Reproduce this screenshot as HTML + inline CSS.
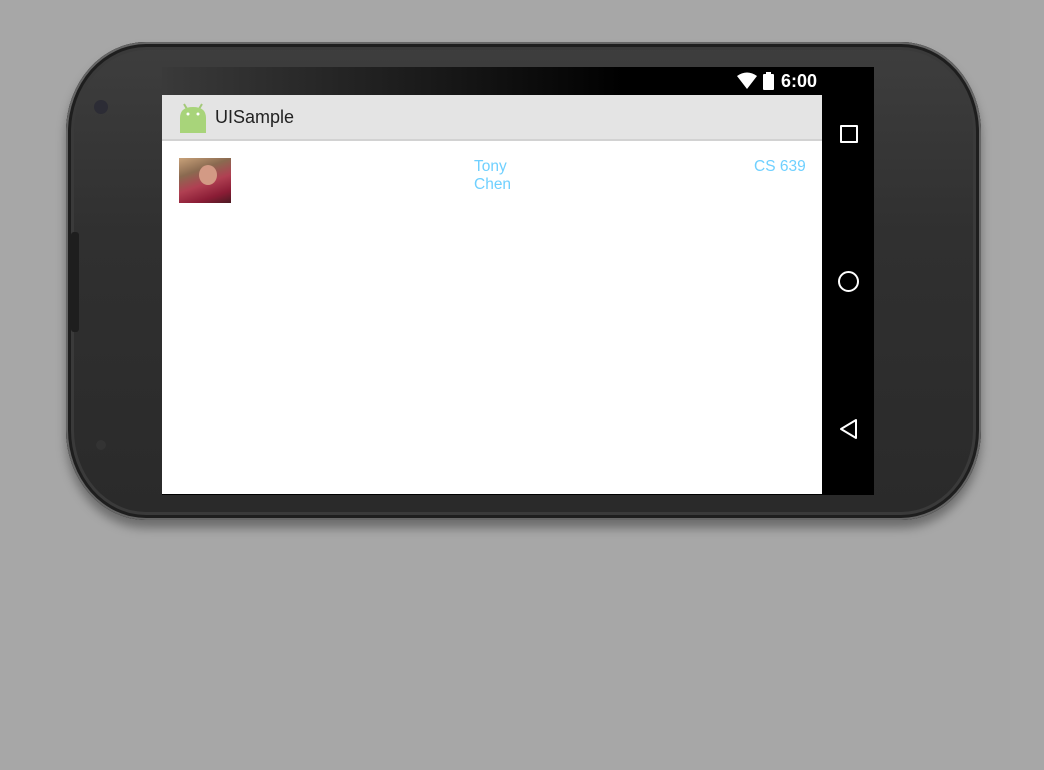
<!DOCTYPE html>
<html><head><style>
body{margin:0;width:1044px;height:770px;background:#a7a7a7;position:relative;overflow:hidden;font-family:"Liberation Sans",sans-serif}
.phone{position:absolute;left:66px;top:42px;width:915px;height:478px;border-radius:80px/90px;background:linear-gradient(#3e3e3e,#303030 40%,#2a2a2a);box-shadow:0 8px 10px rgba(0,0,0,.35),inset 0 0 0 2px #666,inset 0 0 0 5px #1e1e1e,inset 0 0 0 8px #3a3a3a}
.abs{position:absolute}
</style></head><body>
<div class="phone"></div>
<div class="abs" style="left:94px;top:100px;width:14px;height:14px;border-radius:50%;background:#2c2c35"></div>
<div class="abs" style="left:96px;top:440px;width:10px;height:10px;border-radius:50%;background:#333"></div>
<div class="abs" style="left:71px;top:232px;width:8px;height:100px;background:#1e1e1e;border-radius:3px"></div>
<div class="abs" style="left:162px;top:67px;width:712px;height:428px;background:#000"></div>
<div class="abs" style="left:162px;top:67px;width:660px;height:28px;background:linear-gradient(90deg,#3a3a3a,#1a1a1a 40%,#000 70%)"></div>
<svg class="abs" style="left:736px;top:72px" width="24" height="18"><path d="M1 4 Q11 -3 21 4 L11 17 Z" fill="#fff"/></svg>
<div class="abs" style="left:763px;top:74px;width:11px;height:16px;background:#fff;border-radius:1px"></div>
<div class="abs" style="left:766px;top:72px;width:5px;height:3px;background:#fff"></div>
<div class="abs" style="left:781px;top:71px;color:#fff;font-weight:bold;font-size:18px">6:00</div>
<div class="abs" style="left:162px;top:95px;width:660px;height:399px;background:#fff"></div>
<div class="abs" style="left:162px;top:95px;width:660px;height:44px;background:#e4e4e4;border-bottom:2px solid #d2d2d2"></div>
<svg class="abs" style="left:177px;top:101px" width="32" height="32"><line x1="7" y1="3" x2="10" y2="8" stroke="#a4c97a" stroke-width="2"/><line x1="25" y1="3" x2="22" y2="8" stroke="#a4c97a" stroke-width="2"/><path d="M3 17 Q3 6 16 6 Q29 6 29 17 L29 32 L3 32 Z" fill="#a8d47a"/><circle cx="11" cy="13" r="1.5" fill="#fff"/><circle cx="21" cy="13" r="1.5" fill="#fff"/></svg>
<div class="abs" style="left:215px;top:107px;font-size:18px;color:#222">UISample</div>
<div class="abs" style="left:179px;top:158px;width:52px;height:45px;background:linear-gradient(160deg,#c9a27a 0%,#8a6a50 30%,#b04052 55%,#8a1c35 80%,#4a1a22)"></div>
<div class="abs" style="left:199px;top:165px;width:18px;height:20px;border-radius:50%;background:#d39a85"></div>
<div class="abs" style="left:474px;top:158px;font-size:15.5px;color:#6fd0ff;line-height:18px">Tony<br>Chen</div>
<div class="abs" style="left:754px;top:158px;font-size:15.5px;color:#6fd0ff;line-height:18px">CS 639</div>
<div class="abs" style="left:840px;top:125px;width:14px;height:14px;border:2px solid #fff;border-radius:1px"></div>
<div class="abs" style="left:838px;top:271px;width:17px;height:17px;border:2px solid #fff;border-radius:50%"></div>
<svg class="abs" style="left:838px;top:418px" width="22" height="22"><path d="M18 2 L3 11 L18 20 Z" fill="none" stroke="#fff" stroke-width="2" stroke-linejoin="round"/></svg>
</body></html>
